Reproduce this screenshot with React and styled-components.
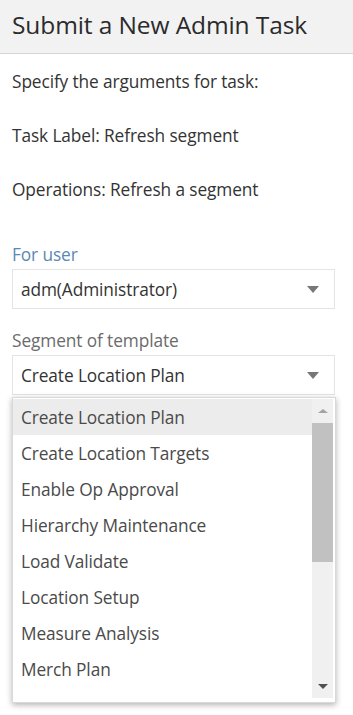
import React from "react";
import styled, { createGlobalStyle } from "styled-components";

const Global = createGlobalStyle`
  html, body { margin: 0; padding: 0; background: #fff; }
  body { font-family: "Open Sans", "Noto Sans", sans-serif; color: #333; }
  * { box-sizing: border-box; }
`;

const Page = styled.div`
  width: 353px;
  height: 715px;
  overflow: hidden;
  display: flex;
  flex-direction: column;
`;

const Header = styled.div`
  height: 54px;
  background: #f2f2f2;
  border-bottom: 1px solid #d4d4d4;
  display: flex;
  align-items: center;
  padding: 0 12px 5px;
`;

const Title = styled.h1`
  margin: 0;
  font-size: 24.5px;
  font-weight: 400;
  color: #2b2b2b;
  letter-spacing: -0.1px;
  white-space: nowrap;
`;

const Body = styled.div`
  padding: 16px 12px 0;
  display: flex;
  flex-direction: column;
`;

const Para = styled.p`
  margin: 0;
  height: 54px;
  line-height: 24px;
  font-size: 17.3px;
  color: #333;
  letter-spacing: -0.1px;
  white-space: nowrap;
`;

const Field = styled.div`
  display: flex;
  flex-direction: column;
  margin-top: ${(p) => p.$top}px;
  position: relative;
`;

const Label = styled.div`
  font-size: 17.3px;
  line-height: 20px;
  height: 20px;
  letter-spacing: -0.1px;
  color: ${(p) => (p.$active ? "#5a89b3" : "#6b6b6b")};
  margin-bottom: 4px;
`;

const SelectBox = styled.div`
  height: 40px;
  width: 323px;
  border: 1px solid #e4e4e4;
  background: #fff;
  display: flex;
  align-items: center;
  justify-content: space-between;
  padding: 0 15px 0 8px;
  font-size: 17.3px;
  letter-spacing: -0.1px;
  color: #333;
`;

const Caret = styled.span`
  width: 0;
  height: 0;
  border-left: ${(p) => p.$size}px solid transparent;
  border-right: ${(p) => p.$size}px solid transparent;
  border-top: ${(p) => (p.$up ? 0 : p.$h)}px solid ${(p) => p.$color};
  border-bottom: ${(p) => (p.$up ? p.$h : 0)}px solid ${(p) => p.$color};
  display: block;
`;

const Popup = styled.div`
  position: absolute;
  left: 0;
  top: 66px;
  width: 324px;
  height: 306px;
  background: #fff;
  border: 1px solid #d9d9d9;
  box-shadow: 0 2px 6px rgba(0, 0, 0, 0.3);
  display: flex;
  align-items: flex-start;
  padding: 1px 2px 0 0;
  z-index: 2;
`;

const List = styled.ul`
  list-style: none;
  margin: 0;
  padding: 0;
  flex: 1;
  height: 299px;
  overflow: hidden;
`;

const Item = styled.li`
  height: 36px;
  display: flex;
  align-items: center;
  padding-left: 8px;
  font-size: 17.3px;
  letter-spacing: -0.1px;
  color: #4a4a4a;
  white-space: nowrap;
  background: ${(p) => (p.$selected ? "#ececec" : "transparent")};
`;

const Scrollbar = styled.div`
  width: 21px;
  height: 299px;
  background: #f0f0f0;
  display: flex;
  flex-direction: column;
  align-items: center;
`;

const ArrowCell = styled.div`
  height: 24px;
  width: 100%;
  display: flex;
  align-items: center;
  justify-content: center;
`;

const Thumb = styled.div`
  width: 100%;
  height: 139px;
  background: #c1c1c1;
`;

const Spacer = styled.div`
  flex: 1;
`;

const items = [
  "Create Location Plan",
  "Create Location Targets",
  "Enable Op Approval",
  "Hierarchy Maintenance",
  "Load Validate",
  "Location Setup",
  "Measure Analysis",
  "Merch Plan",
  "Merch Targets",
];

export default function App() {
  return (
    <Page>
      <Global />
      <Header>
        <Title>Submit a New Admin Task</Title>
      </Header>
      <Body>
        <Para>Specify the arguments for task:</Para>
        <Para>Task Label: Refresh segment</Para>
        <Para>Operations: Refresh a segment</Para>
        <Field $top={13}>
          <Label $active>For user</Label>
          <SelectBox>
            adm(Administrator)
            <Caret $size={6} $h={7} $color="#777" />
          </SelectBox>
        </Field>
        <Field $top={22}>
          <Label>Segment of template</Label>
          <SelectBox>
            Create Location Plan
            <Caret $size={6} $h={7} $color="#777" />
          </SelectBox>
          <Popup>
            <List>
              {items.map((t, i) => (
                <Item key={t} $selected={i === 0}>
                  {t}
                </Item>
              ))}
            </List>
            <Scrollbar>
              <ArrowCell>
                <Caret $up $size={5} $h={4} $color="#a3a3a3" />
              </ArrowCell>
              <Thumb />
              <Spacer />
              <ArrowCell>
                <Caret $size={5} $h={5} $color="#505050" />
              </ArrowCell>
            </Scrollbar>
          </Popup>
        </Field>
      </Body>
    </Page>
  );
}
